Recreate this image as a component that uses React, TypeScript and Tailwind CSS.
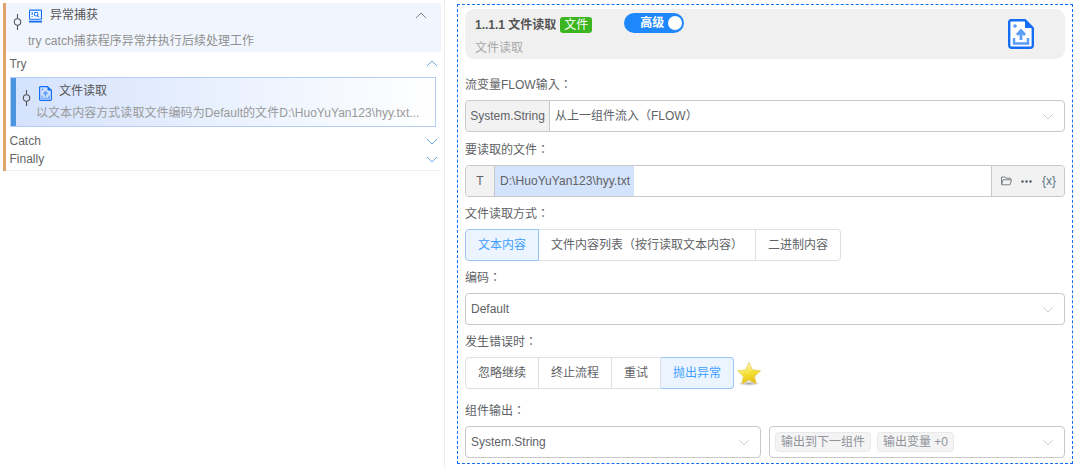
import React from "react";

const Chevron = ({ up = false, className = "" }: { up?: boolean; className?: string }) => (
  <svg width="12" height="7" viewBox="0 0 12 7" fill="none" stroke="currentColor" strokeWidth="1" className={className}>
    <path d={up ? "M1 6 L6 1 L11 6" : "M1 1 L6 6 L11 1"} />
  </svg>
);

const Connector = () => (
  <svg width="9" height="16" viewBox="0 0 9 16" fill="none" stroke="#555" strokeWidth="1.1" className="shrink-0">
    <path d="M4.5 0 V4.5 M4.5 11 V16" />
    <circle cx="4.5" cy="8" r="3.2" />
  </svg>
);

const FileIcon = ({ size = 13, fill = "#ffffff" }: { size?: number; fill?: string }) => (
  <svg width={size} height={Math.round(size * 1.15)} viewBox="0 0 26 30" className="shrink-0">
    <path d="M2.5 1.2 H17 L24.8 9 V26.5 A2.3 2.3 0 0 1 22.5 28.8 H3.5 A2.3 2.3 0 0 1 1.2 26.5 V2.5 Z" fill={fill} stroke="#146ef5" strokeWidth="2.4" strokeLinejoin="round" />
    <path d="M17 1.5 V9 H24.5 Z" fill="#146ef5" />
    <circle cx="7" cy="7" r="1.8" fill="#5b9cf8" />
    <path d="M13 21 V12.5 M9 16 L13 11.5 L17 16" fill="none" stroke="#5b9cf8" strokeWidth="2.8" />
    <path d="M6 19 V24.5 H20 V19" fill="none" stroke="#5b9cf8" strokeWidth="2.4" />
  </svg>
);

const MonitorIcon = () => (
  <svg width="13" height="15" viewBox="0 0 14 15" className="shrink-0">
    <rect x="0.6" y="0.6" width="12.8" height="9.8" rx="0.6" fill="#ffffff" stroke="#146ef5" strokeWidth="1.2" />
    <path d="M3.4 2.6 V6 M3.4 7 V8" stroke="#146ef5" strokeWidth="1.1" />
    <circle cx="7.7" cy="5" r="2" fill="none" stroke="#146ef5" strokeWidth="1.1" />
    <path d="M9 6.5 L10.8 8.3" stroke="#146ef5" strokeWidth="1.1" />
    <rect x="0" y="12" width="14" height="2" fill="#146ef5" />
  </svg>
);

const Star = () => (
  <svg width="26" height="26" viewBox="0 0 26 26" className="shrink-0">
    <defs>
      <linearGradient id="st" x1="0.3" y1="0" x2="0.6" y2="1">
        <stop offset="0" stopColor="#fff8c0" />
        <stop offset="0.55" stopColor="#f5de30" />
        <stop offset="1" stopColor="#e0b818" />
      </linearGradient>
      <radialGradient id="sh">
        <stop offset="0" stopColor="#888" stopOpacity="0.7" />
        <stop offset="1" stopColor="#888" stopOpacity="0" />
      </radialGradient>
    </defs>
    <ellipse cx="13" cy="22.5" rx="11" ry="2.5" fill="url(#sh)" />
    <path d="M13 1.5 L16.4 8.8 L24.6 9.8 L18.6 15.2 L20.2 23 L13 19 L5.8 23 L7.4 15.2 L1.4 9.8 L9.6 8.8 Z" fill="url(#st)" stroke="#e0c24a" strokeWidth="0.6" strokeLinejoin="round" />
  </svg>
);

const Label = ({ children, className = "" }: { children: React.ReactNode; className?: string }) => (
  <div className={`h-4 leading-4 text-[#606266] font-['Liberation_Sans','Noto_Sans_CJK_TC',sans-serif] ${className}`}>{children}</div>
);

const Select = ({ children, className = "" }: { children: React.ReactNode; className?: string }) => (
  <div className={`h-8 flex items-center justify-between border border-[#c8c8c8] rounded-[4px] bg-white pl-[5px] pr-[10px] ${className}`}>
    <div className="flex items-center gap-[6px] min-w-0">{children}</div>
    <Chevron className="text-[#c9ced8]" />
  </div>
);

const Segments = ({ items, active }: { items: string[]; active: string }) => (
  <div className="flex h-8">
    {items.map((t, i) => {
      const on = t === active;
      return (
        <div
          key={t}
          className={`flex items-center px-3 border-y border-r ${i === 0 ? "border-l rounded-l-[4px]" : ""} ${i === items.length - 1 ? "rounded-r-[4px]" : ""} ${on ? "bg-[#ecf5ff] border-[#99c8f8] text-[#409eff]" : "bg-white border-[#dcdfe6] text-[#606266]"}`}
        >
          {t}
        </div>
      );
    })}
  </div>
);

const Tag = ({ children }: { children: React.ReactNode }) => (
  <span className="h-5 leading-[18px] px-[5px] rounded-[4px] bg-[#f4f4f5] border border-[#e9e9eb] text-[#909399] whitespace-nowrap">{children}</span>
);

export default function App() {
  return (
    <div className="flex w-[1077px] h-[468px] bg-white overflow-hidden text-[12px] text-[#606266] font-['Liberation_Sans','Noto_Sans_CJK_SC',sans-serif]">
      <div className="w-[445px] shrink-0 border-r border-[#eeeeee] pt-[3px] pl-[3px] pr-[3px]">
        <div className="border-l-[3px] border-[#e0a36b] h-[168px]">
          <div className="h-[49px] bg-[#f1f6fe]">
            <div className="flex items-center h-[25px] pl-[7px] pr-[14px]">
              <div className="mt-[13px] mr-[7px]"><Connector /></div>
              <div className="mt-[1px] mr-[8px]"><MonitorIcon /></div>
              <span className="text-[#555555] flex-1 -mt-[1px]">异常捕获</span>
              <Chevron up className="text-[#7d8590] -mt-[1px]" />
            </div>
            <div className="pl-[22px] mt-[5px] h-4 leading-4 text-[#8f8f8f] tracking-[0.03px]">try catch捕获程序异常并执行后续处理工作</div>
          </div>
          <div className="flex items-center justify-between h-[23px] pl-[3.5px] pr-[3px] text-[#666666]">
            <span>Try</span>
            <Chevron up className="text-[#6aa7e8]" />
          </div>
          <div className="ml-[4px] mr-[5px] mt-[2px] h-[50px] flex border border-[#b4cdf8] bg-gradient-to-r from-[#d4e2fd] to-[#ffffff]">
            <div className="w-[5px] bg-[#4a94e0] shrink-0" />
            <div className="flex-1 min-w-0 pl-[6px]">
              <div className="flex items-start h-[27px] pt-[8px]">
                <div className="mt-[4px] mr-[8px]"><Connector /></div>
                <div className="mr-[7px]"><FileIcon size={13} fill="#cfe0fc" /></div>
                <span className="text-[#555555] flex items-center h-[9px]">文件读取</span>
              </div>
              <div className="pl-[14px] h-4 leading-4 text-[#999999] whitespace-nowrap tracking-[0.05px]">以文本内容方式读取文件编码为Default的文件D:\HuoYuYan123\hyy.txt...</div>
            </div>
          </div>
          <div className="flex items-center justify-between h-[18px] mt-[5px] pl-[3.5px] pr-[3px] text-[#666666]">
            <span>Catch</span>
            <Chevron className="text-[#6aa7e8]" />
          </div>
          <div className="flex items-center justify-between h-[18px] pl-[3.5px] pr-[3px] text-[#666666]">
            <span>Finally</span>
            <Chevron className="text-[#6aa7e8]" />
          </div>
          <div className="mt-[2px] border-b border-[#eeeeee]" />
        </div>
      </div>

      <div className="ml-[12px] mt-[4px] w-[616px] h-[460px] border border-dashed border-[#146ef5] px-[7px] pt-[4px]">
        <div className="h-[50px] bg-[#f0f0f0] rounded-[9px] flex justify-between pl-[10px] pr-[31px]">
          <div>
            <div className="flex items-center h-[18px] mt-[7px]">
              <span className="font-bold text-[#555555]">1..1.1 文件读取</span>
              <span className="ml-[4px] h-4 leading-4 px-[4px] bg-[#3cb521] rounded-[3px] text-white text-[12px]">文件</span>
              <div className="ml-[32px] -mt-[4px] w-[60px] h-5 rounded-[10px] bg-[#1e87fb] flex items-center justify-end pr-[2px]">
                <span className="text-white font-bold mr-[4px]">高级</span>
                <span className="w-[14px] h-[14px] rounded-full bg-white" />
              </div>
            </div>
            <div className="mt-[6px] h-4 leading-4 text-[#a8a8a8]">文件读取</div>
          </div>
          <div className="mt-[10px]"><FileIcon size={26} /></div>
        </div>

        <Label className="mt-[18px]">流变量FLOW输入：</Label>
        <div className="mt-[7px] h-8 flex border border-[#c8c8c8] rounded-[4px]">
          <div className="w-[84px] shrink-0 bg-[#f2f2f2] border-r border-[#c8c8c8] rounded-l-[4px] flex items-center justify-center">System.String</div>
          <div className="flex-1 flex items-center justify-between pl-[5px] pr-[10px]">
            <span>从上一组件流入（FLOW）</span>
            <Chevron className="text-[#c9ced8]" />
          </div>
        </div>

        <Label className="mt-[9px] pt-[1px] h-[17px]">要读取的文件：</Label>
        <div className="mt-[7px] h-8 flex border border-[#c8c8c8] rounded-[4px]">
          <div className="w-[29px] shrink-0 bg-[#f2f2f2] border-r border-[#c8c8c8] rounded-l-[4px] flex items-center justify-center">T</div>
          <div className="flex-1 flex items-center">
            <span className="h-full flex items-center bg-[#d3e3fb] pl-[5px] pr-[4px] tracking-[0.05px]">D:\HuoYuYan123\hyy.txt</span>
          </div>
          <div className="w-[73px] shrink-0 bg-[#f2f2f2] border-l border-[#c8c8c8] rounded-r-[4px] flex items-center pl-[9px] gap-[9px]">
            <svg width="11" height="10" viewBox="0 0 11 10" fill="none" stroke="#7a8288" strokeWidth="1">
              <path d="M0.5 8.5 V1 H4 L5 2.2 H9.5 V3.8 M0.5 8.8 L2 3.8 H10.5 L9 8.8 Z" />
            </svg>
            <svg width="11" height="3" viewBox="0 0 11 3" fill="#4f5a66">
              <circle cx="1.5" cy="1.5" r="1.2" /><circle cx="5.5" cy="1.5" r="1.2" /><circle cx="9.5" cy="1.5" r="1.2" />
            </svg>
            <span className="ml-[1px] text-[#5f7486] text-[12px] leading-none">{"{x}"}</span>
          </div>
        </div>

        <Label className="mt-[8px] pt-[1px] h-[17px]">文件读取方式：</Label>
        <div className="mt-[7px]"><Segments items={["文本内容", "文件内容列表（按行读取文本内容）", "二进制内容"]} active="文本内容" /></div>

        <Label className="mt-[8px] pt-[1px] h-[17px]">编码：</Label>
        <Select className="mt-[7px]"><span>Default</span></Select>

        <Label className="mt-[8px] pt-[1px] h-[17px]">发生错误时：</Label>
        <div className="mt-[7px] flex items-center">
          <Segments items={["忽略继续", "终止流程", "重试", "抛出异常"]} active="抛出异常" />
          <div className="ml-[2px] mt-[2px]"><Star /></div>
        </div>

        <Label className="mt-[13px] pt-[1px] h-[17px]">组件输出：</Label>
        <div className="mt-[7px] flex gap-2">
          <Select className="w-[296px] shrink-0"><span>System.String</span></Select>
          <Select className="flex-1"><Tag>输出到下一组件</Tag><Tag>输出变量 +0</Tag></Select>
        </div>
      </div>
    </div>
  );
}
